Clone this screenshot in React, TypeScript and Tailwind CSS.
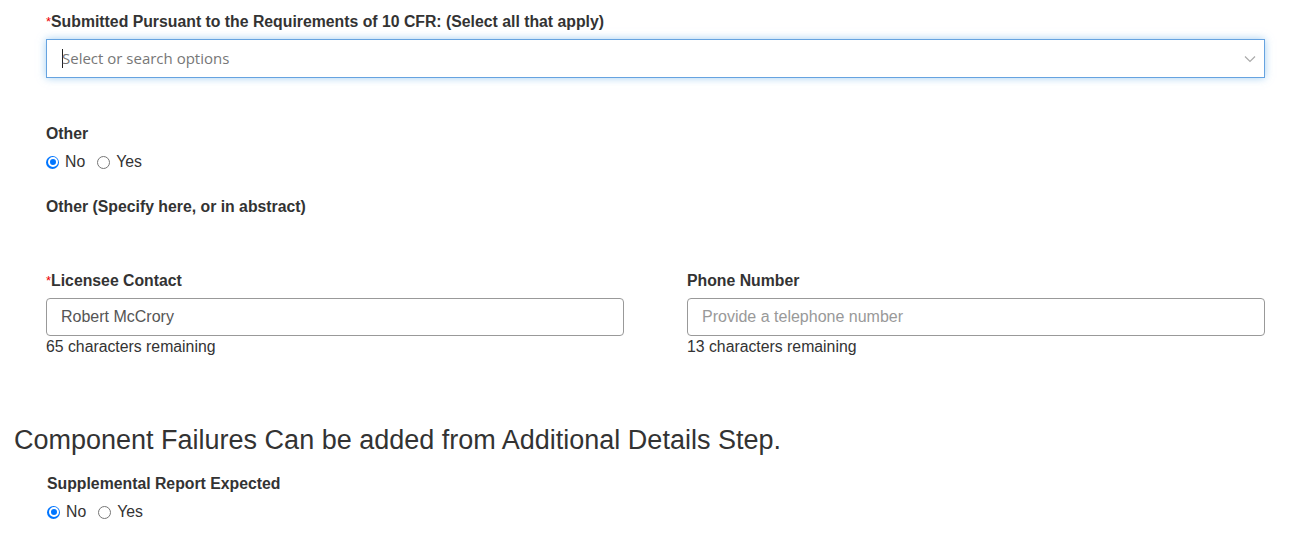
import React from "react";

const Req = () => <span className="text-[#e00] font-normal text-[13px] align-top">*</span>;

function Radio({ checked, label }: { checked?: boolean; label: string }) {
  return (
    <label className="flex items-center gap-[6px] mr-[12px]">
      {checked ? (
        <span className="w-[13px] h-[13px] rounded-full bg-[#0075ff] flex items-center justify-center">
          <span className="w-[10px] h-[10px] rounded-full bg-[#0075ff] border-2 border-white" />
        </span>
      ) : (
        <span className="w-[13px] h-[13px] rounded-full border border-[#767676] bg-white" />
      )}
      <span>{label}</span>
    </label>
  );
}

function TextField({ label, required, value, placeholder, remaining }: { label: string; required?: boolean; value?: string; placeholder?: string; remaining: string }) {
  return (
    <div className="flex-1">
      <div className="font-bold text-[15.8px] h-[20px] leading-[20px]">
        {required && <Req />}
        {label}
      </div>
      <div className="mt-[7px] h-[38px] border border-[#999] rounded-[4px] px-[14px] flex items-center text-[16px]">
        {value ? <span className="text-[#555]">{value}</span> : <span className="text-[#999]">{placeholder}</span>}
      </div>
      <div className="text-[15.8px] leading-[20px] mt-[1px]">{remaining}</div>
    </div>
  );
}

export default function App() {
  return (
    <div className="w-[1290px] h-[556px] bg-white text-[#333] font-['Liberation_Sans',Arial,sans-serif] overflow-hidden">
      <div className="pl-[46px] pr-[25px] pt-[12px]">
        <div className="font-bold text-[15.8px] leading-[20px]">
          <Req />
          Submitted Pursuant to the Requirements of 10 CFR: (Select all that apply)
        </div>
        <div className="mt-[7px] h-[39px] border border-[#66a3e0] shadow-[0_0_8px_rgba(102,175,233,0.6)] flex items-center pl-[15px] pr-[8px]">
          <span className="w-[1px] h-[19px] bg-[#222]" />
          <span className="text-[15px] text-[#777] font-['Open_Sans',sans-serif] -ml-[1px] flex-1 -mt-[1px]">Select or search options</span>
          <svg width="12" height="8" viewBox="0 0 12 8" className="text-[#aaa]">
            <path d="M1 1.5 L6 6.5 L11 1.5" fill="none" stroke="currentColor" strokeWidth="1.2" />
          </svg>
        </div>

        <div className="mt-[46px] font-bold text-[15.8px] leading-[20px]">Other</div>
        <div className="mt-[8px] flex items-center text-[15.8px] leading-[20px]">
          <Radio checked label="No" />
          <Radio label="Yes" />
        </div>
        <div className="mt-[25px] font-bold text-[15.8px] leading-[20px]">Other (Specify here, or in abstract)</div>

        <div className="mt-[54px] flex gap-[63px]">
          <TextField label="Licensee Contact" required value="Robert McCrory" remaining="65 characters remaining" />
          <TextField label="Phone Number" placeholder="Provide a telephone number" remaining="13 characters remaining" />
        </div>
      </div>

      <div className="pl-[14px] mt-[68px] text-[27px] leading-[30px] text-[#333]">
        Component Failures Can be added from Additional Details Step.
      </div>
      <div className="pl-[47px] mt-[19px]">
        <div className="font-bold text-[15.8px] leading-[20px]">Supplemental Report Expected</div>
        <div className="mt-[8px] flex items-center text-[15.8px] leading-[20px]">
          <Radio checked label="No" />
          <Radio label="Yes" />
        </div>
      </div>
    </div>
  );
}
